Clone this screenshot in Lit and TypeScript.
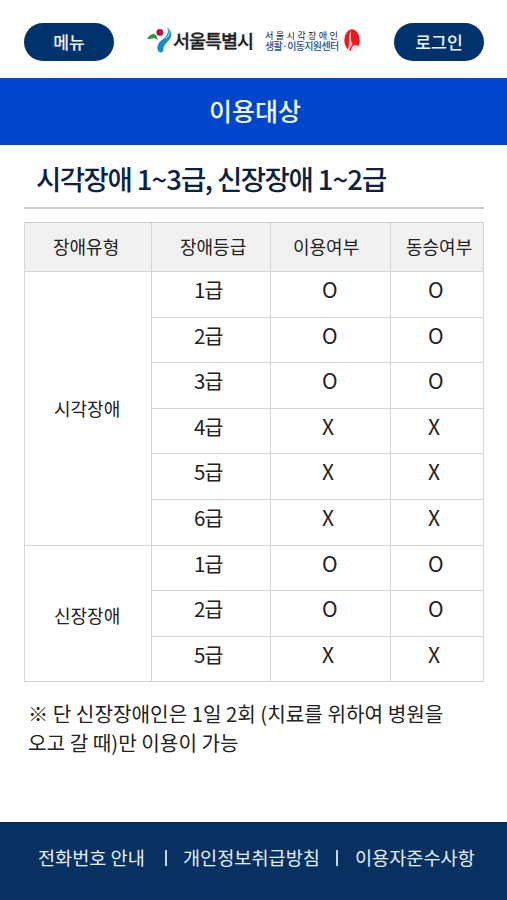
import { LitElement, html, css, svg } from "lit";
import { customElement } from "lit/decorators.js";

interface Group {
  name: string;
  rows: [string, string][];
}

const groups: Group[] = [
  {
    name: "시각장애",
    rows: [["1급", "O"], ["2급", "O"], ["3급", "O"], ["4급", "X"], ["5급", "X"], ["6급", "X"]],
  },
  {
    name: "신장장애",
    rows: [["1급", "O"], ["2급", "O"], ["5급", "X"]],
  },
];

const citySymbol = svg`
  <path d="M0.3 11.8C2.2 7.8 6 6 8.2 7.4C9.9 8.7 10.2 10.8 10.9 13C8.8 11.8 7.8 11.1 6.2 11.3C4 11.6 2.1 12.6 0.3 11.8Z" fill="#2d9245"/>
  <circle cx="12.8" cy="5.4" r="3.4" fill="#c3103a"/>
  <path d="M20.2 0.4C25.6 3.4 25.4 10.2 21 14.2C17.6 17.4 16.6 19.3 16.4 23C16 26.2 11.6 26.4 10.6 22.4C9.5 18 12.4 14.6 16.2 11.9C20.4 8.8 22 5 20.2 0.4Z" fill="#168bd0"/>
  <path d="M21.4 1.6C23.3 5 22 9 18.8 11.6" fill="none" stroke="#8acdf0" stroke-width="1.1"/>`;

const centerSymbol = svg`
  <ellipse cx="8" cy="11.3" rx="7.7" ry="11" fill="#ef1721"/>
  <path d="M6.6 1.4C5.2 4 5.1 8 5.2 12.5C5.2 16 4.4 18.6 3.6 20.2L5.4 21.6C6 18.6 6.6 16.8 8.6 15.4C7.4 13.6 7 11.6 6.9 8Z" fill="#ffc9c8"/>
  <path d="M7 22.4C6.8 18.6 8.6 15.8 12.6 16.2L14.2 17.4C13 20 11.2 21.8 9 22.3Z" fill="#ffe9e8"/>`;

@customElement("app-root")
export class AppRoot extends LitElement {
  static styles = css`
    :host {
      display: flex;
      flex-direction: column;
      height: 900px;
      background: #fff;
      color: #222;
      font-family: "Noto Sans CJK KR", "Noto Sans", sans-serif;
      white-space: nowrap;
    }
    * { box-sizing: border-box; }
    .top {
      height: 78px;
      padding: 6px 23px 0 24px;
      display: flex;
      align-items: center;
    }
    .pill {
      width: 90px;
      height: 38px;
      padding: 0 0 1px;
      border: 0;
      border-radius: 19px;
      background: #00326b;
      color: #eef5ff;
      font: 500 17.2px/34px "Noto Sans CJK KR", sans-serif;
    }
    .brand { display: flex; flex: 1; height: 38px; align-items: center; }
    .city-symbol { width: 25px; height: 26px; margin: 0 0 4px 33px; }
    .city-name {
      margin: 0 0 4px 1px;
      width: 90px;
      font-size: 18.5px;
      font-weight: 500;
      letter-spacing: -1px;
      line-height: 26px;
      -webkit-text-stroke: 0.3px #222;
    }
    .center-name { width: 76px; margin: 0 0 3px 2px; }
    .first { height: 10px; font-size: 9.2px; line-height: 10px; letter-spacing: 2.3px; }
    .second {
      height: 11px;
      line-height: 11px;
      color: #244f9e;
      font-size: 10px;
      letter-spacing: -0.65px;
      font-weight: 500;
    }
    .center-symbol { width: 16px; height: 23px; margin: 0 0 3px 3px; }
    .title {
      height: 67px;
      margin: 0;
      background: #0046cc;
      color: #f2f8ff;
      text-align: center;
      font-size: 25px;
      font-weight: 500;
      line-height: 64px;
      padding-left: 3px;
    }
    main { flex: 1; padding: 0 23px 0 24px; }
    h2 {
      height: 64px;
      margin: 0;
      padding-left: 12px;
      border-bottom: 2px solid #ccc;
      color: #0b2242;
      font-size: 27.5px;
      font-weight: 500;
      letter-spacing: -1.5px;
      word-spacing: 0.8px;
      line-height: 66px;
    }
    .num { letter-spacing: -0.9px; }
    .grid {
      display: grid;
      grid-template-columns: 127px 119px 120px 93px;
      grid-template-rows: 49px repeat(9, 45.6px);
      width: 460px;
      margin-top: 13px;
      height: 460.4px;
      border-top: 1px solid #ccc;
      border-left: 1px solid #d8d8d8;
    }
    .cell {
      border-right: 1px solid #d4d4d4;
      border-bottom: 1px solid #d4d4d4;
      font-size: 20px;
      line-height: 35px;
    }
    .head { background: #f1f1f1; font-size: 18px; line-height: 47px; }
    .type { display: flex; align-items: center; padding-left: 29px; font-size: 18px; }
    .type.head { padding-left: 28px; line-height: 47px; padding-bottom: 1px; }
    .type.span-3 { padding-top: 5px; }
    .col-grade { padding-left: 42px; font-size: 20.5px; letter-spacing: -1px; }
    .head.col-grade { padding-left: 28px; font-size: 18px; letter-spacing: 0; }
    .col-use { padding-left: 51px; font-size: 21px; }
    .head.col-use { padding-left: 22px; font-size: 18px; }
    .col-ride { padding-left: 37px; font-size: 21px; }
    .head.col-ride { padding-left: 15px; font-size: 18px; }
    .span-6 { grid-row: span 6; }
    .span-3 { grid-row: span 3; }
    .note { margin: 17px 0 0 4px; font-size: 20.2px; line-height: 29px; }
    footer {
      height: 78px;
      background: #083162;
      color: #e4eefb;
      font-size: 18.6px;
      line-height: 69px;
      display: flex;
      padding-left: 38px;
    }
    .bar { width: 2px; height: 16px; margin: 28px 0 0; background: #c8d6e8; }
    .link { color: inherit; text-decoration: none; }
    .phone { width: 127px; }
    .privacy { width: 153px; margin-left: 16px; }
    .rules { margin-left: 17px; }
  `;

  render() {
    return html`
      <header class="top">
        <button class="pill">메뉴</button>
        <div class="brand">
          <svg class="city-symbol" viewBox="0 0 25 26">${citySymbol}</svg>
          <div class="city-name">서울특별시</div>
          <div class="center-name">
            <div class="first">서울시각장애인</div>
            <div class="second">생활·이동지원센터</div>
          </div>
          <svg class="center-symbol" viewBox="0 0 16 23">${centerSymbol}</svg>
        </div>
        <button class="pill">로그인</button>
      </header>
      <h1 class="title">이용대상</h1>
      <main>
        <h2>시각장애 <span class="num">1~3</span>급, 신장장애 <span class="num">1~2</span>급</h2>
        <div class="grid">
          <div class="cell head type">장애유형</div>
          <div class="cell head col-grade">장애등급</div>
          <div class="cell head col-use">이용여부</div>
          <div class="cell head col-ride">동승여부</div>
          ${groups.map(
            (g) => html`
              <div class="cell type span-${g.rows.length}">${g.name}</div>
              ${g.rows.map(
                ([grade, mark]) => html`
                  <div class="cell col-grade">${grade}</div>
                  <div class="cell col-use">${mark}</div>
                  <div class="cell col-ride">${mark}</div>
                `
              )}
            `
          )}
        </div>
        <div class="note">※ 단 신장장애인은 1일 2회 (치료를 위하여 병원을<br />오고 갈 때)만 이용이 가능</div>
      </main>
      <footer>
        <a class="link phone">전화번호 안내</a>
        <span class="bar"></span>
        <a class="link privacy">개인정보취급방침</a>
        <span class="bar"></span>
        <a class="link rules">이용자준수사항</a>
      </footer>
    `;
  }
}
